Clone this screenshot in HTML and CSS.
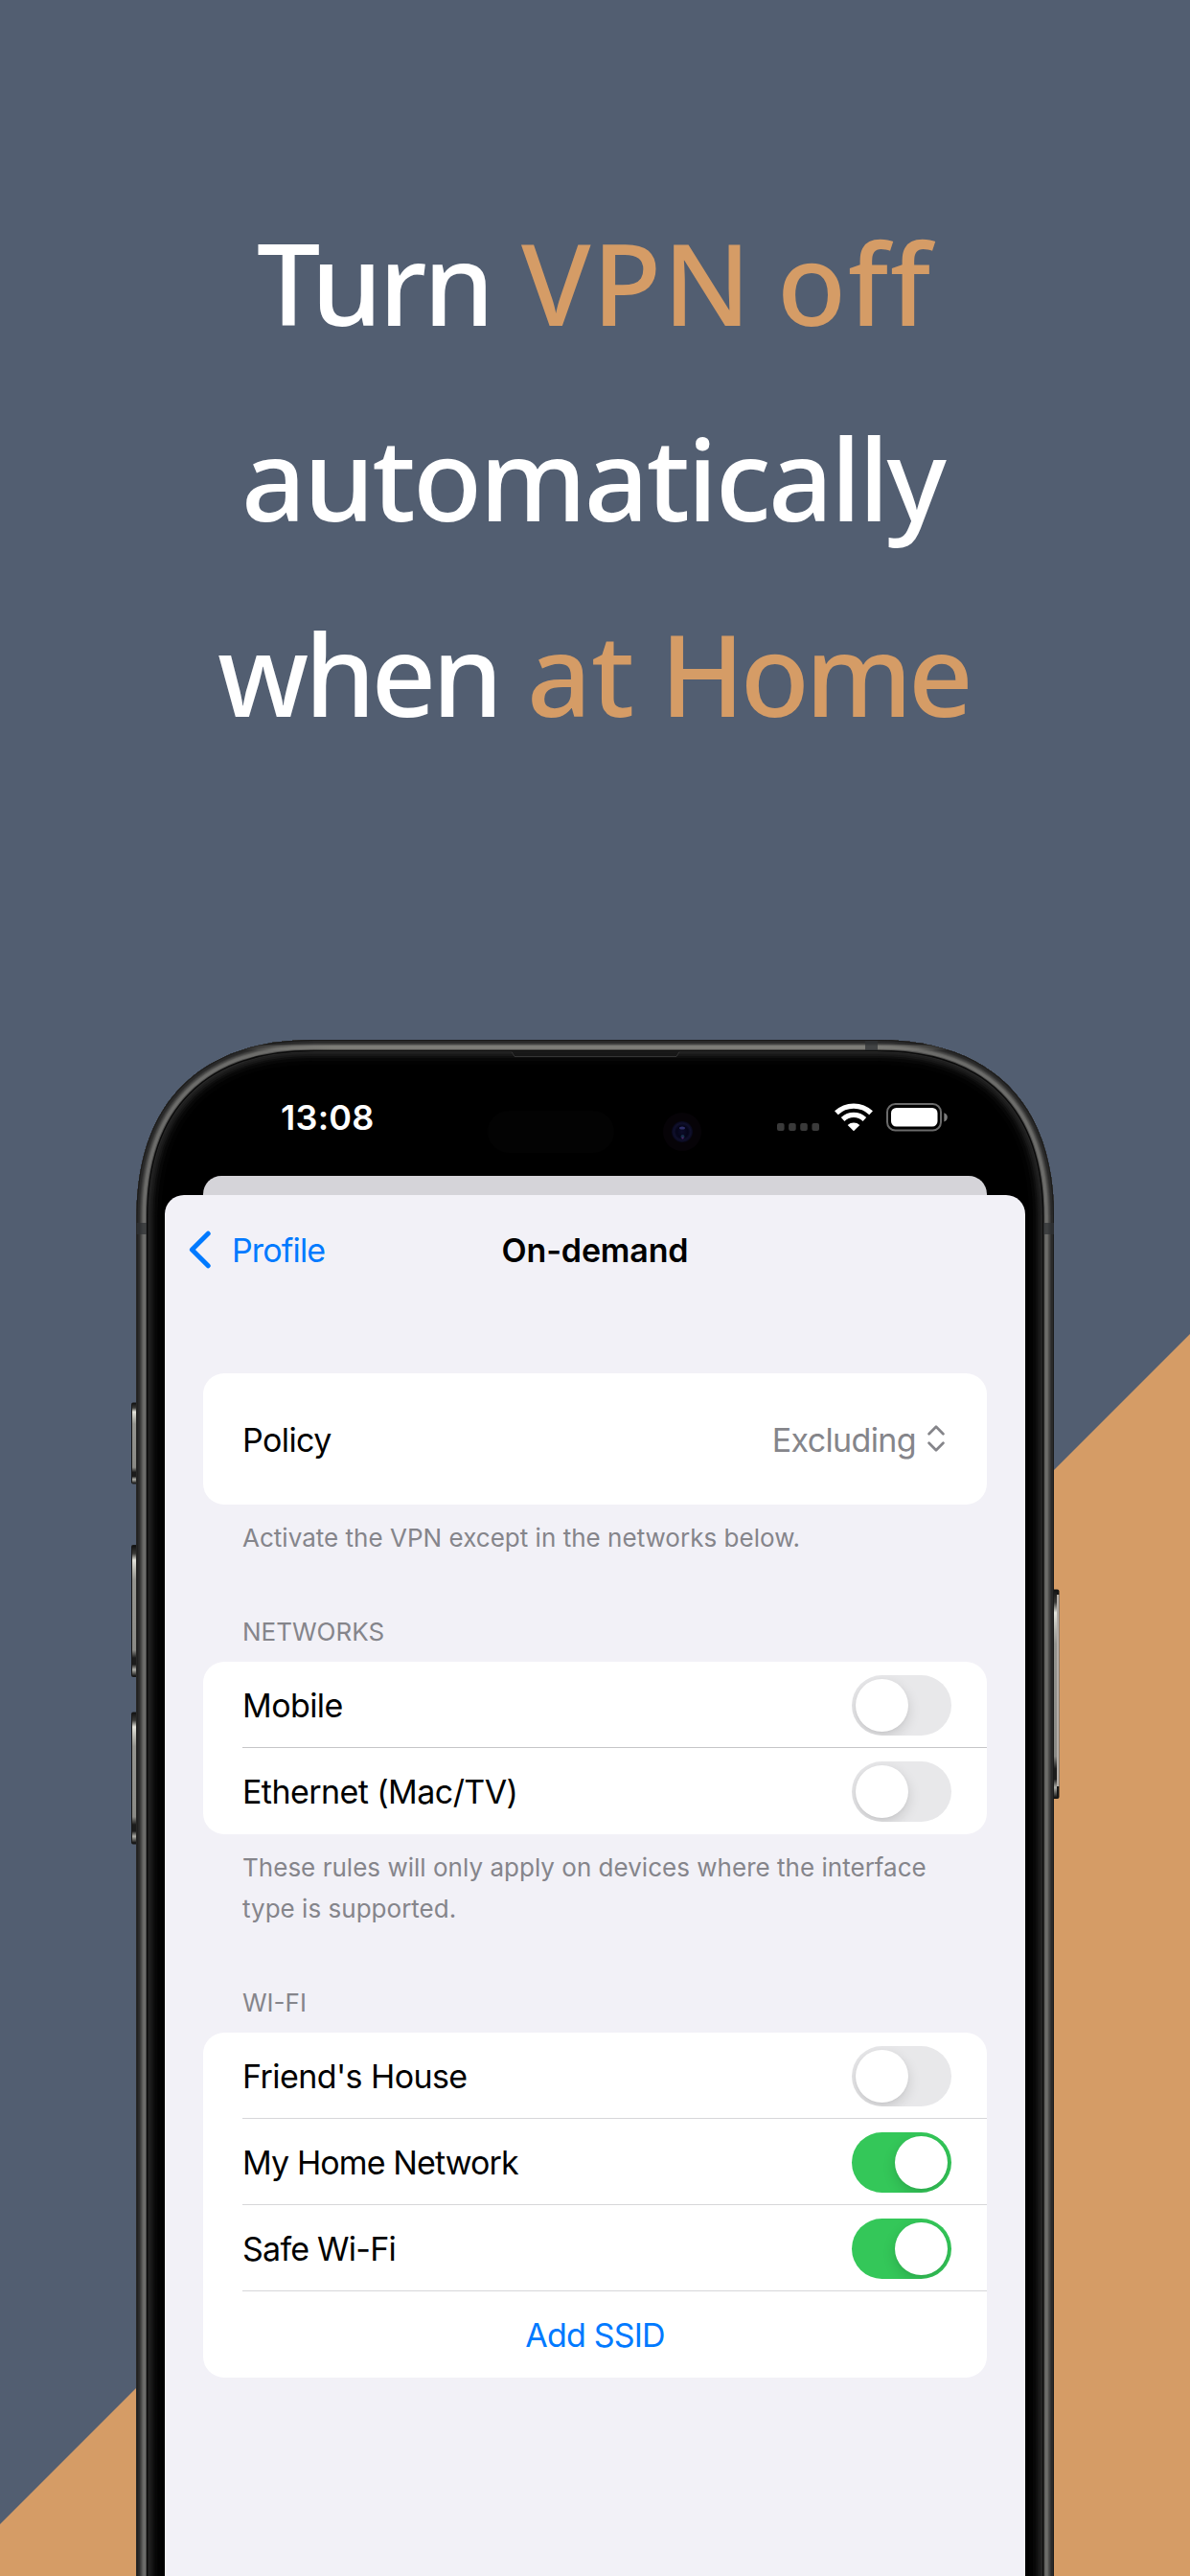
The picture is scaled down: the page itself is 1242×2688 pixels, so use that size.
FILE: index.html
```html
<!DOCTYPE html>
<html lang="en">
<head>
<meta charset="utf-8">
<title>Turn VPN off automatically when at Home</title>
<link rel="stylesheet" href="styles.css">
</head>
<body>
<main class="stage">
  <h1 class="headline">
    <span class="line line-1"><span class="word turn">Turn</span> <span class="word vpn accent">VPN</span> <span class="word off accent">off</span></span>
    <span class="line line-2"><span class="word auto">automatically</span></span>
    <span class="line line-3"><span class="word when">when</span> <span class="word at accent">at</span> <span class="word home accent">Home</span></span>
  </h1>

  <svg class="device" width="1242" height="1603" viewBox="0 1085 1242 1603" aria-hidden="true">
    <defs>
      <path id="body" d="M142.5 2740V1270C142.5 1150.8 208.3 1085 327.5 1085H915C1034.2 1085 1100 1150.8 1100 1270V2740Z"/>
      <clipPath id="clip"><use href="#body"/></clipPath>
      <linearGradient id="edge" x1="0" x2="1" y1="0" y2="0">
        <stop offset="0" stop-color="#8a8982" stop-opacity="0"/>
        <stop offset=".15" stop-color="#8a8982"/>
        <stop offset=".85" stop-color="#8a8982"/>
        <stop offset="1" stop-color="#8a8982" stop-opacity="0"/>
      </linearGradient>
      <linearGradient id="btn" x1="0" x2="0" y1="0" y2="1">
        <stop offset="0" stop-color="#111"/>
        <stop offset=".06" stop-color="#3a3a38"/>
        <stop offset=".11" stop-color="#e4e4dc"/>
        <stop offset=".19" stop-color="#b5b5ae"/>
        <stop offset=".26" stop-color="#94948f"/>
        <stop offset=".8" stop-color="#8a8a86"/>
        <stop offset=".86" stop-color="#1c1c1c"/>
        <stop offset=".91" stop-color="#1c1c1c"/>
        <stop offset=".95" stop-color="#b0b0aa"/>
        <stop offset="1" stop-color="#111"/>
      </linearGradient>
      <radialGradient id="lens">
        <stop offset="0" stop-color="#0c0c2a"/>
        <stop offset=".55" stop-color="#050518"/>
        <stop offset=".8" stop-color="#10102c"/>
        <stop offset="1" stop-color="#07071a"/>
      </radialGradient>
    </defs>

    <!-- side buttons -->
    <g>
      <rect x="137" y="1463.5" width="8" height="85" rx="2" fill="#171717"/>
      <rect x="138" y="1464" width="4" height="84" fill="url(#btn)"/>
      <rect x="137" y="1612" width="8" height="138" rx="2" fill="#171717"/>
      <rect x="138" y="1613" width="4" height="136" fill="url(#btn)"/>
      <rect x="137" y="1786.5" width="8" height="138" rx="2" fill="#171717"/>
      <rect x="138" y="1787" width="4" height="136" fill="url(#btn)"/>
      <rect x="1098" y="1658.5" width="7.5" height="218.5" rx="2" fill="#171717"/>
      <rect x="1100" y="1659" width="3" height="217" fill="url(#btn)"/>
      <rect x="1103" y="1664" width="2.4" height="200" fill="#b3aca6"/>
    </g>

    <use href="#body" fill="#000"/>
    <g clip-path="url(#clip)" fill="none">
      <use href="#body" stroke="#020202" stroke-width="52"/>
      <use href="#body" stroke="#070707" stroke-width="44"/>
      <use href="#body" stroke="#0e0e0e" stroke-width="38"/>
      <use href="#body" stroke="#171717" stroke-width="34"/>
      <use href="#body" stroke="#1e1e1e" stroke-width="30"/>
      <use href="#body" stroke="#272727" stroke-width="26"/>
      <use href="#body" stroke="#0a0a0a" stroke-width="24"/>
      <use href="#body" stroke="#4c4c4b" stroke-width="21"/>
      <use href="#body" stroke="#6c6c6a" stroke-width="19"/>
      <use href="#body" stroke="#656563" stroke-width="14"/>
      <use href="#body" stroke="#515150" stroke-width="12"/>
      <use href="#body" stroke="#444443" stroke-width="10"/>
      <use href="#body" stroke="#353535" stroke-width="8"/>
      <use href="#body" stroke="#292929" stroke-width="6"/>
      <use href="#body" stroke="#1a1a1a" stroke-width="2"/>
      <rect x="230" y="1090.5" width="790" height="5" fill="url(#edge)" opacity=".6"/>
      <g fill="#2f3234" opacity=".75">
        <rect x="142" y="1276" width="11" height="12"/>
        <rect x="1089" y="1276" width="11" height="12"/>
        <rect x="903" y="1086" width="13" height="10"/>
      </g>
    </g>

    <!-- earpiece, sensor pill and camera -->
    <path d="M534 1097.5L537 1102.5H706L709 1097.5Z" fill="#171717"/>
    <path d="M534 1097.5L537 1102.5H706L709 1097.5" fill="none" stroke="#343434"/>
    <rect x="509" y="1159" width="132" height="44" rx="22" fill="#030303"/>
    <circle cx="712" cy="1181" r="20" fill="#060307"/>
    <circle cx="712" cy="1181" r="11" fill="url(#lens)"/>
    <ellipse cx="712" cy="1177" rx="3" ry="1.6" fill="#2e2e68"/>
    <circle cx="712.5" cy="1186" r="2" fill="#16304a"/>
    <circle cx="712.5" cy="1187.5" r="1" fill="#54206a"/>
  </svg>

  <section class="phone">
    <header class="status">
      <span class="time">13:08</span>
      <div class="indicators">
        <svg width="44" height="8" viewBox="0 0 44 8" fill="#3a3a3a" class="dots">
          <rect width="7.6" height="8" rx="2"/><rect x="12.1" width="7.6" height="8" rx="2"/><rect x="24.2" width="7.6" height="8" rx="2"/><rect x="36.4" width="7.6" height="8" rx="2"/>
        </svg>
        <svg width="40" height="30" viewBox="0 0 40 30" class="wifi" fill="none" stroke="#fff">
          <path d="M1.9 10.3A26.3 26.3 0 0 1 38.1 10.3" stroke-width="5.4"/>
          <path d="M8.6 17A16.6 16.6 0 0 1 31.4 17" stroke-width="5.2"/>
          <path d="M20 29.3L13.7 22.9A9.4 9.4 0 0 1 26.3 22.9Z" fill="#fff" stroke="none"/>
        </svg>
        <svg width="64" height="30" viewBox="0 0 64 30" class="battery">
          <rect x="1" y="1" width="56" height="27.5" rx="8.5" fill="none" stroke="#6b6b6b" stroke-width="2"/>
          <rect x="5" y="5" width="48.5" height="19.5" rx="5.5" fill="#fff"/>
          <path d="M60.3 10.2C65 11.2 65 18.4 60.3 19.4Z" fill="#7b7b7b"/>
        </svg>
      </div>
    </header>
    <div class="behind"></div>

    <div class="sheet">
      <nav class="nav">
        <a class="back">
          <svg width="24" height="40" viewBox="0 0 24 40"><path d="M20.2 3.2L3.4 20L20.2 36.8" fill="none" stroke="#007aff" stroke-width="5" stroke-linecap="round" stroke-linejoin="round"/></svg>
          <span>Profile</span>
        </a>
        <h2 class="title">On-demand</h2>
      </nav>

      <div class="card policy">
        <div class="row">
          <span class="label">Policy</span>
          <span class="picker">Excluding
            <svg width="18" height="28" viewBox="0 0 18 28" fill="none" stroke="#85858a" stroke-width="2.7" stroke-linecap="round" stroke-linejoin="round"><path d="M1.6 9.3L9 1.8L16.4 9.3M1.6 18.7L9 26.2L16.4 18.7"/></svg>
          </span>
        </div>
      </div>
      <p class="note">Activate the VPN except in the networks below.</p>

      <h3 class="group">NETWORKS</h3>
      <div class="card">
        <div class="row"><span class="label">Mobile</span><span class="toggle"></span></div>
        <div class="row strong"><span class="label">Ethernet (Mac/TV)</span><span class="toggle"></span></div>
      </div>
      <p class="note">These rules will only apply on devices where the interface<br>type is supported.</p>

      <h3 class="group">WI-FI</h3>
      <div class="card">
        <div class="row"><span class="label">Friend's House</span><span class="toggle"></span></div>
        <div class="row"><span class="label home-net">My Home Network</span><span class="toggle on"></span></div>
        <div class="row"><span class="label safe">Safe Wi-Fi</span><span class="toggle on"></span></div>
        <div class="row add"><a>Add SSID</a></div>
      </div>
    </div>
  </section>
</main>
</body>
</html>
```
FILE: styles.css
```css
* { box-sizing: border-box; }

body { margin: 0; }

.stage {
  position: relative;
  display: flex;
  flex-direction: column;
  width: 1242px;
  height: 2688px;
  overflow: hidden;
  background: #525e71;
  font-family: Inter, "Liberation Sans", sans-serif;
}

/* orange wedge rising to the right at 45 degrees */
.stage::before {
  content: "";
  position: absolute;
  inset: 0;
  background: #d59c66;
  clip-path: polygon(0 2634px, 1242px 1392px, 1242px 2688px, 0 2688px);
}

/* headline */
.headline {
  position: relative;
  height: 1085px;
  margin: 0;
  padding-top: 193px;
  color: #fff;
  font: 500 118px/204px "Noto Sans", "Open Sans", sans-serif;
}
.line { display: flex; height: 204px; white-space: nowrap; }
.line-1 { padding-left: 268px; }
.line-2 { padding-left: 252px; }
.line-3 { padding-left: 227px; }
.accent { color: #d59c66; }
.turn { width: 276px; letter-spacing: -3.4px; }
.vpn { width: 267px; letter-spacing: 1.7px; }
.off { letter-spacing: 1.9px; }
.auto { letter-spacing: -2.55px; }
.when { width: 323px; letter-spacing: -4.3px; }
.at { width: 139px; letter-spacing: -.5px; }
.home { letter-spacing: -4.4px; }

/* phone */
.device { position: absolute; left: 0; top: 1085px; }

.phone {
  position: relative;
  flex: 1;
  display: flex;
  flex-direction: column;
  width: 898px;
  margin-left: 172px;
}

.status {
  display: flex;
  align-items: center;
  justify-content: space-between;
  height: 142px;
  padding: 20px 81px 0 121px;
}
.time { color: #fff; font-size: 36px; font-weight: 600; letter-spacing: .25px; }
.indicators { display: flex; align-items: center; }
.dots { margin: 20px 16px 0 0; }
.wifi { margin-right: 14px; }

.behind {
  height: 20px;
  margin: 0 40px;
  border-radius: 19px 19px 0 0;
  background: #d5d4d9;
}

.sheet {
  flex: 1;
  padding: 0 40px;
  border-radius: 20px 20px 0 0;
  background: #f2f1f7;
}

.nav {
  display: grid;
  grid-template-columns: 1fr auto 1fr;
  align-items: center;
  height: 114px;
  margin: 0 -15px 72px;
  font-size: 34px;
}
.back {
  display: flex;
  align-items: center;
  gap: 21px;
  color: #007aff;
  letter-spacing: -.85px;
}
.title {
  margin: 0;
  font-size: 34px;
  font-weight: 600;
  letter-spacing: -.16px;
}

/* grouped lists */
.card { border-radius: 22px; background: #fff; }

.row {
  position: relative;
  display: flex;
  align-items: center;
  justify-content: space-between;
  height: 90px;
  padding: 0 37px 0 41px;
  color: #000;
  font-size: 34px;
  letter-spacing: -.57px;
}
.row + .row::before {
  content: "";
  position: absolute;
  left: 41px;
  right: 0;
  top: -1px;
  height: 1px;
  background: #d6d6d9;
}
.row.strong::before { background: #c6c6c8 !important; }
.policy .row { height: 137px; padding-right: 44px; }
.label { padding-top: 1px; }
.home-net { letter-spacing: -.88px; }
.safe { letter-spacing: -.76px; }

.picker {
  display: flex;
  align-items: center;
  gap: 12px;
  color: #85858a;
  line-height: 42px;
  padding-top: 2px;
  letter-spacing: -.64px;
}
.picker svg { margin-top: -4px; }

.row.add { justify-content: center; padding: 0; }
.add a { color: #007aff; letter-spacing: -.82px; }

.note {
  margin: 13px -20px 0 0;
  padding-left: 41px;
  color: #85858b;
  font-size: 26px;
  line-height: 43px;
  letter-spacing: .02px;
  white-space: nowrap;
}
.group {
  margin: 55px 0 10px;
  padding-left: 41px;
  color: #85858b;
  font-size: 26px;
  font-weight: 400;
  line-height: 43px;
}

/* switch */
.toggle {
  display: flex;
  width: 104px;
  height: 63px;
  margin-top: 1px;
  padding: 4px;
  border-radius: 32px;
  background: #e8e8ea;
  overflow: hidden;
}
.toggle::before {
  content: "";
  width: 55px;
  height: 55px;
  border-radius: 50%;
  background: #fff;
  box-shadow: 0 5px 14px rgba(0, 0, 0, .14), 0 1px 3px rgba(0, 0, 0, .04);
}
.toggle.on { justify-content: flex-end; background: #34c759; }
```
